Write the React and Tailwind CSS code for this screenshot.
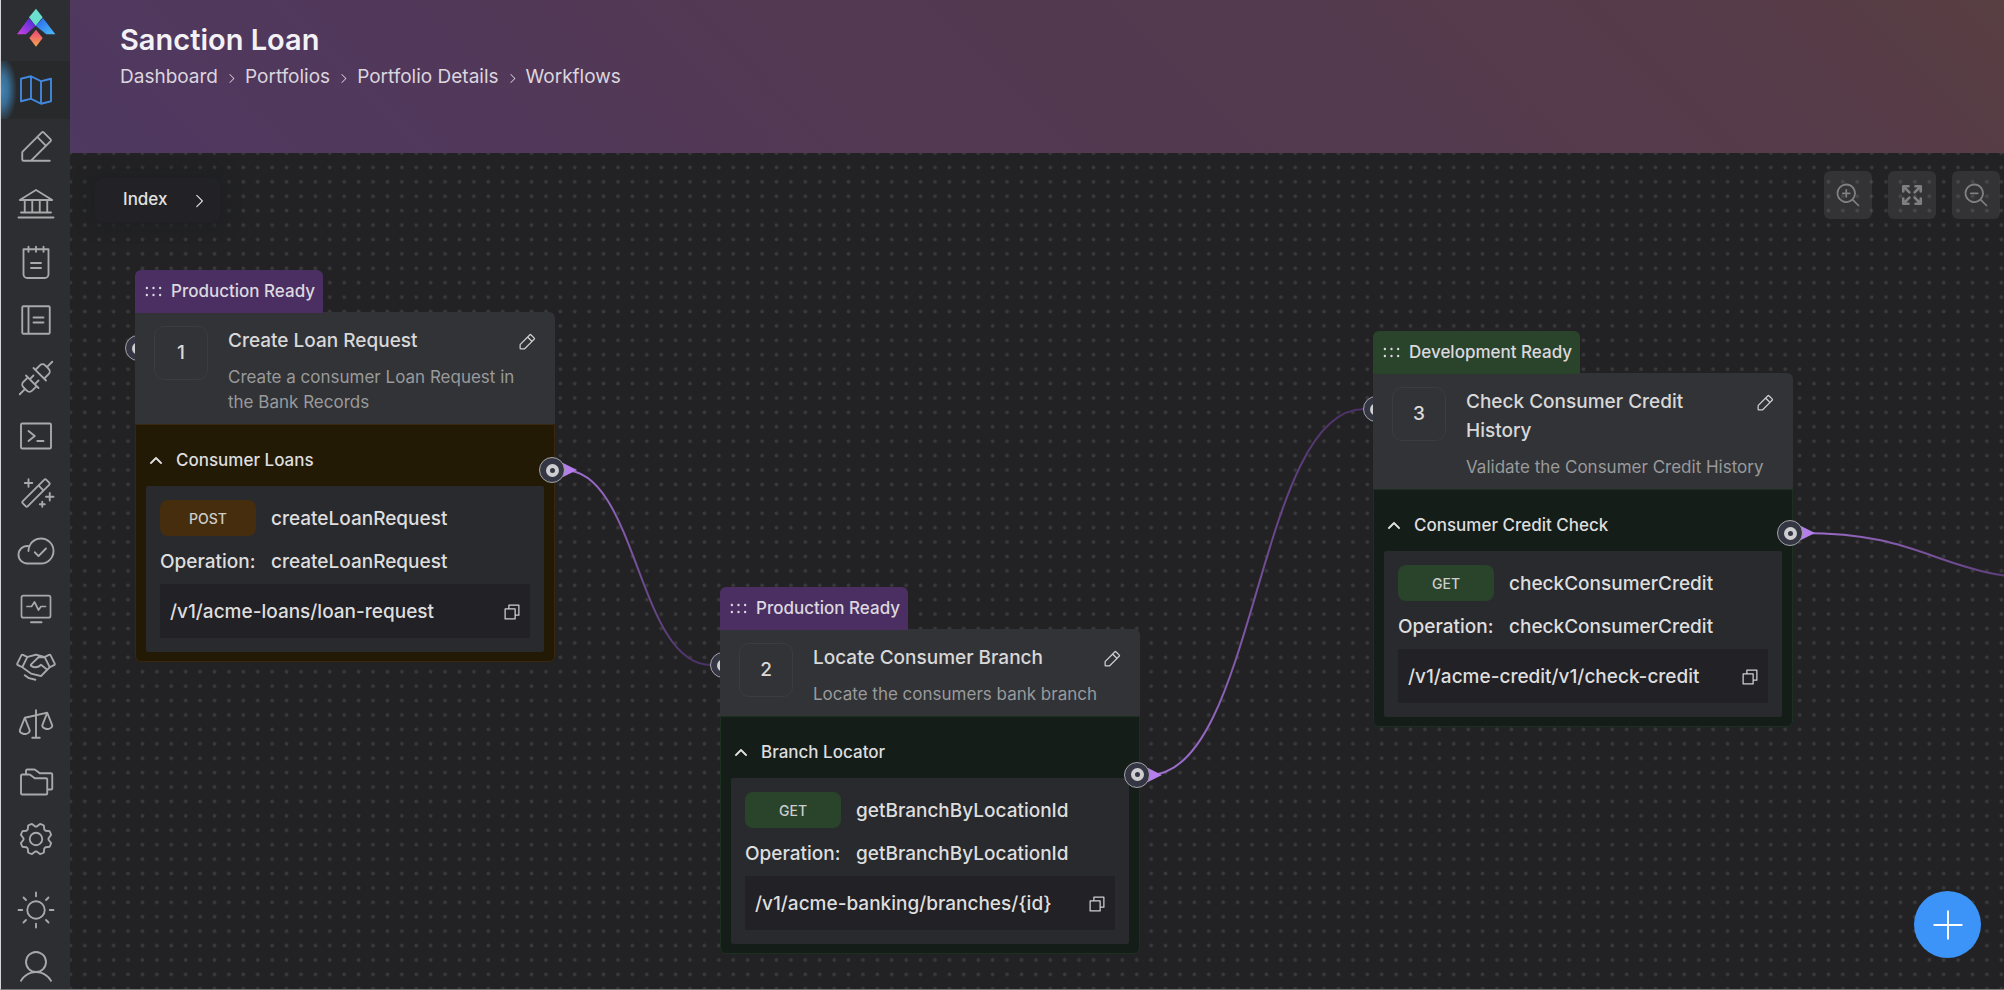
import clsx from "clsx";
import {
  PiArrowsOutBold,
  PiBankLight,
  PiCaretRight,
  PiCaretUpBold,
  PiCloudCheckLight,
  PiCopy,
  PiDotsSix,
  PiFoldersLight,
  PiGearLight,
  PiHandshakeLight,
  PiMagicWandLight,
  PiMagnifyingGlassMinus,
  PiMagnifyingGlassPlus,
  PiMapTrifoldLight,
  PiNotebookLight,
  PiNotepadLight,
  PiPencilSimple,
  PiPencilSimpleLineLight,
  PiPlugsLight,
  PiPlusLight,
  PiScalesLight,
  PiSunLight,
  PiTerminalWindowLight,
  PiUserLight,
} from "react-icons/pi";

const navItems = [
  { label: "Portfolios", icon: PiMapTrifoldLight, active: true },
  { label: "Editor", icon: PiPencilSimpleLineLight },
  { label: "Institutions", icon: PiBankLight },
  { label: "Notes", icon: PiNotepadLight },
  { label: "Catalog", icon: PiNotebookLight },
  { label: "Connectors", icon: PiPlugsLight },
  { label: "Console", icon: PiTerminalWindowLight },
  { label: "Generators", icon: PiMagicWandLight },
  { label: "Deployments", icon: PiCloudCheckLight },
  { label: "Monitoring", icon: MonitorPulse },
  { label: "Partners", icon: PiHandshakeLight },
  { label: "Compliance", icon: PiScalesLight },
  { label: "Files", icon: PiFoldersLight },
  { label: "Settings", icon: PiGearLight },
];

const crumbs = ["Dashboard", "Portfolios", "Portfolio Details", "Workflows"];

const nodes = [
  {
    step: 1,
    position: "left-[65px] top-[117px]",
    status: "Production Ready",
    tone: "production",
    title: "Create Loan Request",
    description: "Create a consumer Loan Request in the Bank Records",
    api: "Consumer Loans",
    method: "POST",
    operation: "createLoanRequest",
    path: "/v1/acme-loans/loan-request",
  },
  {
    step: 2,
    position: "left-[650px] top-[434px]",
    status: "Production Ready",
    tone: "production",
    title: "Locate Consumer Branch",
    description: "Locate the consumers bank branch",
    api: "Branch Locator",
    method: "GET",
    operation: "getBranchByLocationId",
    path: "/v1/acme-banking/branches/{id}",
  },
  {
    step: 3,
    position: "left-[1303px] top-[178px]",
    status: "Development Ready",
    tone: "development",
    title: "Check Consumer Credit History",
    description: "Validate the Consumer Credit History",
    api: "Consumer Credit Check",
    method: "GET",
    operation: "checkConsumerCredit",
    path: "/v1/acme-credit/v1/check-credit",
  },
];

// source and target points in canvas coordinates
const edges = [
  { id: "edge-1", x1: 494, y1: 317, x2: 641, y2: 512 },
  { id: "edge-2", x1: 1079, y1: 622, x2: 1294, y2: 256 },
  { id: "edge-3", x1: 1732, y1: 380, x2: 1997, y2: 427 },
];

const tabTones = {
  production: "bg-[#4b2f63]",
  development: "bg-[#2a442c]",
};

const methodTones = {
  POST: { body: "border-[#3a270f] bg-[#231a05]", badge: "bg-[#462d0d]" },
  GET: { body: "border-[#1c3020] bg-[#151d19]", badge: "bg-[#2a442c]" },
};

function MonitorPulse({ size = 40 }) {
  return (
    <svg width={size} height={size} viewBox="0 0 40 40" fill="none" stroke="currentColor" strokeWidth="1.7" strokeLinecap="round" strokeLinejoin="round">
      <rect x="5.5" y="6.7" width="29" height="22" rx="2" />
      <path d="M11 17.5h4.5l3-4.5 4 8 2.5-3.5h4.5" />
      <path d="M15 33.3h10.5" strokeWidth="2" />
    </svg>
  );
}

function Logo() {
  return (
    <svg width="40" height="40" viewBox="47 25 120 120" role="img" aria-label="Home">
      <defs>
        <linearGradient id="logo-left" x1="1" y1="0" x2="0" y2="1">
          <stop offset="0.2" stopColor="#5a2fd8" />
          <stop offset="1" stopColor="#cf43e2" />
        </linearGradient>
        <linearGradient id="logo-right" x1="0" y1="0" x2="1" y2="1">
          <stop offset="0.2" stopColor="#2f74ef" />
          <stop offset="1" stopColor="#4cc0f6" />
        </linearGradient>
        <linearGradient id="logo-bottom" x1="0" y1="0" x2="0" y2="1">
          <stop offset="0.2" stopColor="#ee5470" />
          <stop offset="1" stopColor="#f3a84c" />
        </linearGradient>
      </defs>
      <path d="M86 55l20 23-29 26H50z" fill="url(#logo-left)" />
      <path d="M128 55l37 49h-27l-32-26z" fill="url(#logo-right)" />
      <path d="M107 27l20 26-21 25-20-25z" fill="#6be0cf" />
      <path d="M107 90l20 25-20 26-20-26z" fill="url(#logo-bottom)" />
    </svg>
  );
}

function Sidebar() {
  return (
    <aside className="flex w-[69px] shrink-0 flex-col bg-[#2d2e31] text-[#a9a9ab]">
      <a href="#" className="flex h-[61px] shrink-0 justify-center pt-2">
        <Logo />
      </a>
      <nav className="flex min-h-0 flex-1 flex-col">
        {navItems.map(({ label, icon: Icon, active }) => (
          <a
            key={label}
            href="#"
            aria-label={label}
            className={clsx(
              "flex min-h-0 flex-1 items-center justify-center",
              active && "bg-[radial-gradient(ellipse_16px_34px_at_0_50%,#3f86b8_0%,#386f97_45%,#28292b_100%)] text-[#4189e0]"
            )}
          >
            <Icon size={40} />
          </a>
        ))}
      </nav>
      <div className="flex shrink-0 flex-col items-center gap-[17px] pt-[22px] pb-[2px]">
        <button type="button" aria-label="Theme">
          <PiSunLight size={40} />
        </button>
        <button type="button" aria-label="Account">
          <PiUserLight size={40} />
        </button>
      </div>
    </aside>
  );
}

function PageHeader() {
  return (
    <header className="h-[153px] shrink-0 bg-[linear-gradient(45deg,#4f3861_0%,#51385b_20%,#533952_40%,#543a4e_65%,#563b48_88%,#583f41_100%)] pt-5 pl-[50px]">
      <h1 className="text-[29px] leading-[40px] font-semibold text-[#f4f1f5]">Sanction Loan</h1>
      <nav aria-label="Breadcrumb" className="mt-[3px] flex items-center text-[19px] leading-[28px] text-[#dcd5de]">
        {crumbs.map((crumb, index) => (
          <span key={crumb} className="flex items-center">
            {index > 0 && <PiCaretRight size={13} className="mx-[7px] mt-[2px]" />}
            <a href="#">{crumb}</a>
          </span>
        ))}
      </nav>
    </header>
  );
}

function Handle({ className }) {
  return (
    <span className={clsx("absolute flex size-[26px] items-center justify-center rounded-full border border-[#a3a3a8] bg-[#343743]", className)}>
      <span className="size-[13px] rounded-full border-4 border-[#cfcfd1]" />
    </span>
  );
}

function WorkflowNode({ node }) {
  const tone = methodTones[node.method];

  return (
    <article className={clsx("absolute w-[420px]", node.position)}>
      <Handle className="top-[65px] -left-[10px]" />
      <div className={clsx("relative z-10 -mb-px inline-flex h-[43px] items-center gap-[5px] rounded-t-md pr-2 pl-[6px] align-top text-[#dcd8df]", tabTones[node.tone])}>
        <PiDotsSix size={25} />
        <span className="pt-px text-[17px] font-medium">{node.status}</span>
      </div>

      <div className="relative">
        <div className="flex items-start rounded-tr-md bg-[#323336] pt-[14px] pr-[18px] pb-[9px] pl-[19px]">
          <span className="flex size-[54px] shrink-0 items-center justify-center rounded-[10px] border border-[#3c3c3e] text-[19px] font-medium text-[#dadada]">
            {node.step}
          </span>
          <div className="ml-5 min-w-0 flex-1">
            <div className="flex items-start justify-between">
              <h2 className="max-w-[270px] text-[19px] leading-[29px] font-medium text-[#d8d8d9]">{node.title}</h2>
              <button type="button" aria-label={`Edit ${node.title}`} className="mt-[6px] text-[#d0d0d1]">
                <PiPencilSimple size={20} />
              </button>
            </div>
            <p className="mt-[10px] text-[17px] leading-[25px] text-[#999a9b]">{node.description}</p>
          </div>
        </div>

        <div className={clsx("rounded-b-md border px-[10px] pt-[10px] pb-[9px] text-[#dededf]", tone.body)}>
          <button type="button" className="flex h-[51px] w-full items-center gap-3 pl-[2px] text-[17px] font-medium">
            <PiCaretUpBold size={16} className="stroke-current [stroke-width:12]" />
            {node.api}
          </button>
          <div className="rounded-xs bg-[#292a2d] p-[14px]">
            <div className="flex items-center gap-[15px] text-[19px] font-medium">
              <span className={clsx("flex h-9 w-24 items-center justify-center rounded-lg text-[14px] text-[#cdcdcd]", tone.badge)}>{node.method}</span>
              <span className="pt-[2px]">{node.operation}</span>
            </div>
            <div className="mt-3 flex gap-[15px] text-[19px] leading-[28px] font-medium">
              <span className="w-24">Operation:</span>
              <span>{node.operation}</span>
            </div>
            <div className="mt-2 flex h-[54px] items-center justify-between bg-[#222125] pt-[2px] pr-2 pl-[10px]">
              <span className="text-[19px] font-medium">{node.path}</span>
              <button type="button" aria-label={`Copy ${node.path}`} className="text-[#cfcfd1]">
                <PiCopy size={20} />
              </button>
            </div>
          </div>
        </div>
      </div>
      <Handle className="top-1/2 -right-[10px] -mt-[9px]" />
    </article>
  );
}

function CanvasBackdrop() {
  return (
    <svg className="absolute inset-0 size-full" aria-hidden="true">
      <defs>
        <pattern id="dots" x="-6.8" y="-7.2" width="14.41" height="14.41" patternUnits="userSpaceOnUse">
          <circle cx="7.2" cy="7.2" r="1.9" fill="#39393b" />
        </pattern>
        {edges.map((edge) => (
          <linearGradient key={edge.id} id={edge.id} gradientUnits="userSpaceOnUse" x1={edge.x1} y1={edge.y1} x2={edge.x2} y2={edge.y2}>
            <stop offset="0" stopColor="#a06fcf" />
            <stop offset="1" stopColor="#4a3063" />
          </linearGradient>
        ))}
      </defs>
      <rect width="100%" height="100%" fill="url(#dots)" />
      {edges.map(({ id, x1, y1, x2, y2 }) => {
        const middle = (x1 + x2) / 2;
        return (
          <g key={id}>
            <path d={`M${x1} ${y1}C${middle} ${y1} ${middle} ${y2} ${x2} ${y2}`} fill="none" stroke={`url(#${id})`} strokeWidth="2" />
            <path d={`M${x1 - 1} ${y1 - 7}l14 7-14 7z`} fill="#b57eea" />
          </g>
        );
      })}
    </svg>
  );
}

function ToolButton({ label, icon: Icon }) {
  return (
    <button type="button" aria-label={label} className="flex size-12 items-center justify-center rounded-md bg-white/8 text-[#7f7f81]">
      <Icon size={28} />
    </button>
  );
}

function Canvas() {
  return (
    <main className="relative min-h-0 flex-1 overflow-hidden bg-[#222225]">
      <CanvasBackdrop />

      <div className="relative flex items-start justify-between pt-[18px] pr-1 pl-[25px]">
        <button
          type="button"
          className="mt-[7px] flex h-[44px] items-center gap-[23px] rounded-lg bg-[#222125] pr-3 pl-7 text-[17px] font-medium text-[#e0e0e1] shadow-[0_0_14px_6px_#1f2023]"
        >
          Index
          <PiCaretRight size={18} className="mt-[2px]" />
        </button>
        <div className="flex gap-4">
          <ToolButton label="Zoom in" icon={PiMagnifyingGlassPlus} />
          <ToolButton label="Fit view" icon={PiArrowsOutBold} />
          <ToolButton label="Zoom out" icon={PiMagnifyingGlassMinus} />
        </div>
      </div>

      {nodes.map((node) => (
        <WorkflowNode key={node.step} node={node} />
      ))}

      <button
        type="button"
        aria-label="Add step"
        className="absolute right-[23px] bottom-[31px] flex size-[67px] items-center justify-center rounded-full bg-[#3c93f8] text-white"
      >
        <PiPlusLight size={40} />
      </button>
    </main>
  );
}

export default function App() {
  return (
    <div className="flex h-screen border-b border-l border-b-[#77777a] border-l-[#d4d4d6] bg-[#222225] font-['Inter',sans-serif]">
      <Sidebar />
      <div className="flex min-w-0 flex-1 flex-col">
        <PageHeader />
        <Canvas />
      </div>
    </div>
  );
}
